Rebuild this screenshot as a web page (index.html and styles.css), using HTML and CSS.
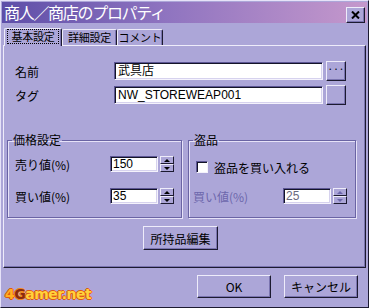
FILE: index.html
```html
<!DOCTYPE html>
<html lang="ja">
<head>
    <meta charset="UTF-8">
    <title>商人／商店のプロパティ</title>
    <link rel="stylesheet" href="styles.css">
</head>
<body>
    <div class="window">
        <div class="titlebar">
            <span class="title">商人／商店のプロパティ</span>
            <button class="close-btn">
                <svg width="9" height="8" viewBox="0 0 9 8"><path d="M1 0.5 L8 7.5 M8 0.5 L1 7.5" stroke="#000" stroke-width="2"/></svg>
            </button>
        </div>

        <div class="tabs">
            <div class="tab tab-active"><span class="focus-box">基本設定</span></div>
            <div class="tab">詳細設定</div>
            <div class="tab">コメント</div>
        </div>

        <div class="panel">
            <div class="fields">
                <span class="label">名前</span>
                <div class="input input-wide">武具店</div>
                <button class="btn btn-small">···</button>

                <span class="label">タグ</span>
                <div class="input input-wide">NW_STOREWEAP001</div>
                <button class="btn btn-small"></button>
            </div>

            <div class="groups">
                <fieldset class="group group-price">
                    <legend>価格設定</legend>
                    <div class="num-row">
                        <span class="num-label">売り値(%)</span>
                        <div class="input input-num">150</div>
                        <div class="spin">
                            <span class="spin-btn"><i class="arrow-up"></i></span>
                            <span class="spin-btn"><i class="arrow-down"></i></span>
                        </div>
                    </div>
                    <div class="num-row">
                        <span class="num-label">買い値(%)</span>
                        <div class="input input-num">35</div>
                        <div class="spin">
                            <span class="spin-btn"><i class="arrow-up"></i></span>
                            <span class="spin-btn"><i class="arrow-down"></i></span>
                        </div>
                    </div>
                </fieldset>

                <fieldset class="group group-stolen">
                    <legend>盗品</legend>
                    <div class="check-row">
                        <span class="checkbox"></span>
                        <span>盗品を買い入れる</span>
                    </div>
                    <div class="num-row disabled">
                        <span class="num-label">買い値(%)</span>
                        <div class="input input-num">25</div>
                        <div class="spin">
                            <span class="spin-btn"><i class="arrow-up"></i></span>
                            <span class="spin-btn"><i class="arrow-down"></i></span>
                        </div>
                    </div>
                </fieldset>
            </div>

            <div class="panel-actions">
                <button class="btn btn-items">所持品編集</button>
            </div>
        </div>

        <div class="footer">
            <div class="logo"><span class="logo-4">4</span><span class="logo-g">G</span>amer.net</div>
            <div class="footer-buttons">
                <button class="btn btn-dialog">OK</button>
                <button class="btn btn-dialog">キャンセル</button>
            </div>
        </div>
    </div>
</body>
</html>
```

FILE: styles.css
```css
* {
    margin: 0;
    padding: 0;
    box-sizing: border-box;
}

body {
    width: 369px;
    height: 308px;
    overflow: hidden;
    background: #aca6d8;
    font-family: 'Liberation Sans', 'Noto Sans CJK JP', sans-serif;
    font-size: 12px;
    color: #000;
}

.window {
    width: 369px;
    height: 308px;
    padding: 1px;
    border-top: 1px solid #e6e2f8;
    border-left: 1px solid #e6e2f8;
    border-right: 1px solid #1c1a30;
    border-bottom: 1px solid #1c1a30;
    display: flex;
    flex-direction: column;
}

/* タイトルバー */
.titlebar {
    height: 21px;
    display: flex;
    justify-content: space-between;
    padding: 0 2px 0 2px;
    background: linear-gradient(to right, #5e4ea8 0%, #8f74c0 45%, #c598cc 100%);
}

.title {
    color: #fff;
    font-family: 'Noto Sans CJK JP', sans-serif;
    font-size: 16px;
    line-height: 21px;
    letter-spacing: -1.3px;
}

.close-btn {
    align-self: flex-end;
    width: 19px;
    height: 16px;
    background: #aca6d8;
    border-top: 1px solid #eeecfa;
    border-left: 1px solid #eeecfa;
    border-right: 1px solid #1c1a30;
    border-bottom: 1px solid #1c1a30;
    box-shadow: inset -1px -1px 0 #7a74b0;
    display: flex;
    align-items: center;
    justify-content: center;
}

/* タブ */
.tabs {
    display: flex;
    align-items: flex-end;
    margin-top: 4px;
    padding-left: 2px;
    height: 18px;
}

.tab {
    height: 16px;
    border-top: 1px solid #eeecfa;
    border-left: 1px solid #eeecfa;
    border-right: 1px solid #1c1a30;
    box-shadow: inset -1px 0 0 #7a74b0;
    border-radius: 2px 2px 0 0;
    font-family: 'Noto Sans CJK JP', sans-serif;
    font-size: 11px;
    letter-spacing: -0.3px;
    line-height: 15px;
    white-space: nowrap;
    text-align: center;
}

.tab:nth-child(2) { width: 55px; }
.tab:nth-child(3) { width: 46px; }

.tab-active {
    width: 58px;
    height: 18px;
    padding: 1px 3px 0 3px;
    position: relative;
    z-index: 1;
    margin-bottom: -1px;
    background: #aca6d8;
}

.focus-box {
    display: block;
    outline: 1px dotted #000;
    line-height: 13px;
    text-align: center;
}

/* パネル */
.panel {
    height: 223px;
    margin: 0 1px 0 1px;
    border-top: 1px solid #eeecfa;
    border-left: 1px solid #eeecfa;
    border-right: 1px solid #1c1a30;
    border-bottom: 1px solid #1c1a30;
    box-shadow: inset -1px -1px 0 #7a74b0;
}

.fields {
    display: grid;
    grid-template-columns: 96px 209px 20px;
    column-gap: 3px;
    row-gap: 4px;
    align-items: center;
    padding: 15px 0 0 11px;
}

.label {
    font-family: 'Noto Sans CJK JP', sans-serif;
}

.input {
    background: #fff;
    border-top: 1px solid #5c5694;
    border-left: 1px solid #5c5694;
    border-right: 1px solid #f4f2fc;
    border-bottom: 1px solid #f4f2fc;
    box-shadow: inset 1px 1px 0 #141428, inset -1px -1px 0 #d6d2ee;
    padding: 0 3px;
    line-height: 14px;
    white-space: nowrap;
    overflow: hidden;
}

.input-wide {
    height: 18px;
    padding-top: 1px;
}

.btn {
    background: #aca6d8;
    border-top: 1px solid #eeecfa;
    border-left: 1px solid #eeecfa;
    border-right: 1px solid #1c1a30;
    border-bottom: 1px solid #1c1a30;
    box-shadow: inset -1px -1px 0 #7a74b0;
    font-family: 'Noto Sans CJK JP', sans-serif;
    font-size: 12px;
    color: #000;
}

.btn-small {
    width: 20px;
    height: 20px;
    font-size: 10px;
    line-height: 10px;
    padding-bottom: 4px;
}

/* グループボックス */
.groups {
    display: flex;
    gap: 6px;
    margin-top: 28px;
    padding-left: 3px;
}

.group {
    height: 85px;
    border: 1px solid #6a64a4;
    box-shadow: 1px 1px 0 #e6e2f8, inset 1px 1px 0 #e6e2f8;
    padding: 9px 0 0 7px;
    display: flex;
    flex-direction: column;
    gap: 16px;
}

.group legend {
    font-family: 'Noto Sans CJK JP', sans-serif;
    line-height: 14px;
    padding: 0 1px;
    margin-left: -3px;
}

.group-price { width: 175px; }
.group-stolen { width: 168px; }

.num-row {
    display: flex;
    align-items: center;
    height: 16px;
}

.num-label {
    width: 95px;
    font-family: 'Noto Sans CJK JP', sans-serif;
}

.group-stolen .num-label {
    width: 90px;
    margin-left: -3px;
}

.input-num {
    width: 48px;
    height: 16px;
    padding: 1px 2px 0;
    line-height: 13px;
}

.spin {
    width: 14px;
    height: 16px;
    margin-left: 2px;
    display: flex;
    flex-direction: column;
}

.spin-btn {
    flex: 1;
    background: #aca6d8;
    border-top: 1px solid #eeecfa;
    border-left: 1px solid #eeecfa;
    border-right: 1px solid #1c1a30;
    border-bottom: 1px solid #1c1a30;
    display: flex;
    align-items: center;
    justify-content: center;
}

.arrow-up,
.arrow-down {
    width: 0;
    height: 0;
    border-left: 3px solid transparent;
    border-right: 3px solid transparent;
}

.arrow-up { border-bottom: 3px solid #000; }
.arrow-down { border-top: 3px solid #000; }

.check-row {
    display: flex;
    align-items: center;
    gap: 6px;
    height: 16px;
    margin: 3px 0 -3px;
    font-family: 'Noto Sans CJK JP', sans-serif;
}

.checkbox {
    width: 12px;
    height: 12px;
    background: #fff;
    border-top: 1px solid #5c5694;
    border-left: 1px solid #5c5694;
    border-right: 1px solid #f4f2fc;
    border-bottom: 1px solid #f4f2fc;
    box-shadow: inset 1px 1px 0 #141428;
}

.disabled .num-label { color: #6c66ac; }
.disabled .input { color: #6a6a80; }
.disabled .arrow-up { border-bottom-color: #6c66ac; }
.disabled .arrow-down { border-top-color: #6c66ac; }

.panel-actions {
    margin-top: 8px;
    padding-left: 139px;
}

.btn-items {
    width: 75px;
    height: 24px;
}

/* フッター */
.footer {
    flex: 1;
    display: flex;
    justify-content: space-between;
    padding: 7px 9px 0 3px;
}

.logo {
    align-self: flex-end;
    margin-bottom: 5px;
    font-family: 'DejaVu Sans', sans-serif;
    font-weight: bold;
    font-size: 14px;
    letter-spacing: -0.5px;
    line-height: 13px;
    color: #ffd23c;
    text-shadow: 1px 0 0 #e05a10, -1px 0 0 #e05a10, 0 1px 0 #e05a10, 0 -1px 0 #e05a10;
}

.logo-4 { color: #ffb020; }
.logo-g { color: #8a2a10; text-shadow: 1px 0 0 #f08a20, -1px 0 0 #f08a20, 0 1px 0 #f08a20, 0 -1px 0 #f08a20; }

.footer-buttons {
    display: flex;
    gap: 13px;
    align-items: flex-start;
}

.btn-dialog {
    width: 74px;
    height: 23px;
}
```
